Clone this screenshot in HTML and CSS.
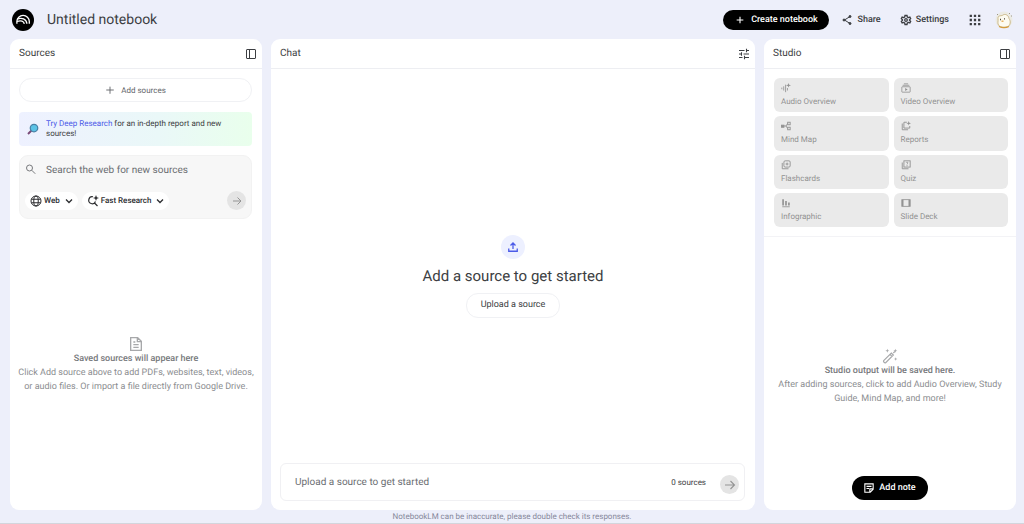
FILE: index.html
```html
<!DOCTYPE html>
<html lang="en">
<head>
  <meta charset="UTF-8">
  <meta name="viewport" content="width=device-width, initial-scale=1.0">
  <title>Untitled notebook</title>
  <link rel="stylesheet" href="styles.css">
</head>
<body>
<header class="topbar">
  <a class="logo" href="#" aria-label="Home">
    <svg viewBox="0 0 22 22" fill="none" stroke="#fff" stroke-width="1.3">
      <circle cx="11" cy="11" r="11" fill="#000" stroke="none"/>
      <path d="M4.900 14.800v-2.200a6.200 6.200 0 0 1 12.400 0v2.200"/>
      <path d="M5.200 10.300c4.400-2.400 9.400 0 9.700 4.500"/>
      <path d="M5 12.500c3.900-1.300 6.900-.4 7.300 2.300"/>
    </svg>
  </a>
  <h1 class="title">Untitled notebook</h1>
  <nav class="actions">
    <button class="pill-dark create">
      <svg class="icon-10" viewBox="0 0 24 24" fill="none" stroke="currentColor" stroke-width="2.600"><path d="M12 4v16M4 12h16"/></svg>
      Create notebook
    </button>
    <button class="link-btn share">
      <svg class="icon-12" viewBox="0 0 24 24" fill="none" stroke="currentColor" stroke-width="2"><path d="M7 12l11-7M7 12l11 7"/><g fill="currentColor"><circle cx="18" cy="5" r="2"/><circle cx="6" cy="12" r="2"/><circle cx="18" cy="19" r="2"/></g></svg>
      Share
    </button>
    <button class="link-btn settings">
      <svg class="icon-12" viewBox="0 0 24 24" fill="none" stroke="currentColor" stroke-width="2.600"><path d="M10 3h4l.7 3 2 1.200 3-.9 1.600 3-2.300 2.100v1.200l2.300 2.100-1.600 3-3-.9-2 1.200-.7 3h-4l-.7-3-2-1.200-3 .9-1.600-3L5 12.600v-1.200L2.700 9.300l1.600-3 3 .9 2-1.200z"/><circle cx="12" cy="12" r="2.600"/></svg>
      Settings
    </button>
    <button class="icon-btn" aria-label="Apps">
      <svg class="icon-16" viewBox="0 0 24 24" fill="currentColor"><path d="M4 4h3.400v3.400H4zM10.300 4h3.400v3.400h-3.400zM16.600 4H20v3.400h-3.400zM4 10.300h3.400v3.400H4zM10.300 10.300h3.400v3.400h-3.400zM16.600 10.300H20v3.400h-3.400zM4 16.600h3.400V20H4zM10.300 16.600h3.400V20h-3.400zM16.600 16.600H20V20h-3.400z"/></svg>
    </button>
    <button class="icon-btn avatar" aria-label="Account">
      <svg viewBox="0 0 18 18" fill="none">
        <circle cx="9" cy="9" r="8.500" fill="#ecebe4"/>
        <path d="M3 7.500C3 4 5.500 5.200 7.500 4.300 10 2.300 13.500 4 14 7.500c2 2.500 1.600 7-1.500 8.200-3 .9-7 .8-8.600-1C2 12.500 3.500 10 3 7.500z" fill="#fdfbf0" stroke="#c0aa72" stroke-width=".8"/>
        <path d="M4 15.500c3 1.400 7 1.400 10 0" stroke="#d39b3d" stroke-width="1.200"/>
        <path d="M5 8.500h1M9 7.800h1" stroke="#4f493c" stroke-width="1.300"/>
        <path d="M6.500 10.200h2" stroke="#e3a54b" stroke-width="1.300"/>
        <path d="M2 3l1 1M14 2l1 1M16 5h1" stroke="#9b9684"/>
      </svg>
    </button>
  </nav>
</header>

<main class="panels">
  <section class="panel">
    <div class="panel-head">
      <h2>Sources</h2>
      <button class="icon-btn" aria-label="Collapse sources">
        <svg class="icon-12" viewBox="0 0 24 24" fill="none" stroke="currentColor" stroke-width="2"><rect x="3" y="3" width="18" height="18" rx="1"/><path d="M9 3v18"/></svg>
      </button>
    </div>
    <div class="sources-top">
      <button class="outline-btn add-sources">
        <svg class="icon-10" viewBox="0 0 24 24" fill="none" stroke="currentColor" stroke-width="2.200"><path d="M12 4v17M3 12h18"/></svg>
        Add sources
      </button>
      <div class="promo">
        <svg class="icon-12" viewBox="0 0 24 24" fill="none"><path d="M9 15l-7 7" stroke="#7a4b78" stroke-width="4"/><circle cx="14" cy="10" r="7.500" fill="#5cc3e6" stroke="#4a81a5" stroke-width="2.500"/></svg>
        <p><a href="#">Try Deep Research</a> for an in-depth report and new sources!</p>
      </div>
      <form class="search">
        <div class="search-row">
          <svg class="icon-12" viewBox="0 0 24 24" fill="none" stroke="currentColor" stroke-width="2"><circle cx="9" cy="8" r="6"/><path d="M13.500 12.500l7 7"/></svg>
          <input type="text" placeholder="Search the web for new sources" aria-label="Search the web for new sources">
        </div>
        <div class="search-row">
          <button type="button" class="chip">
            <svg class="icon-12" viewBox="0 0 24 24" fill="none" stroke="currentColor" stroke-width="2"><circle cx="12" cy="12" r="10"/><ellipse cx="12" cy="12" rx="4.500" ry="10"/><path d="M3 8.500h18M3 15.500h18"/></svg>
            Web
            <svg class="chevron" viewBox="0 0 8 8" fill="none" stroke="currentColor" stroke-width="1.300"><path d="M1 2.500l3 3 3-3"/></svg>
          </button>
          <button type="button" class="chip">
            <svg class="icon-12" viewBox="0 0 24 24" fill="none" stroke="currentColor" stroke-width="2.400"><path d="M12 3.500a7 7 0 1 0 5 9.500M14.500 15.500L21 22"/><path d="M18 0l1.700 4.300L24 6l-4.300 1.700L18 12l-1.700-4.300L12 6l4.300-1.700z" fill="currentColor" stroke="none"/></svg>
            Fast Research
            <svg class="chevron" viewBox="0 0 8 8" fill="none" stroke="currentColor" stroke-width="1.300"><path d="M1 2.500l3 3 3-3"/></svg>
          </button>
          <button class="round-btn" aria-label="Search">
            <svg class="icon-12" viewBox="0 0 24 24" fill="none" stroke="currentColor" stroke-width="2"><path d="M4 12h16M13 5l7 7-7 7"/></svg>
          </button>
        </div>
      </form>
    </div>
    <div class="empty sources-empty">
      <svg class="icon-16" viewBox="0 0 24 24" fill="none" stroke="currentColor" stroke-width="2"><path d="M4 2.500h10.500L20 8v13.500H4zM14 3v5.500h6M8 13h8M8 17h8M8 9h3"/></svg>
      <strong>Saved sources will appear here</strong>
      <p>Click Add source above to add PDFs, websites, text, videos, or audio files. Or import a file directly from Google Drive.</p>
    </div>
  </section>

  <section class="panel">
    <div class="panel-head">
      <h2>Chat</h2>
      <button class="icon-btn" aria-label="Chat settings">
        <svg class="icon-12" viewBox="0 0 24 24" fill="none" stroke="currentColor" stroke-width="2.200"><path d="M2 5h11M17 5h5M17 1.500v7M2 12h5M11 12h11M7 8.500v7M2 19h7M13 19h9M13 15.500v7"/></svg>
      </button>
    </div>
    <div class="chat-body">
      <span class="upload-badge">
        <svg class="icon-12" viewBox="0 0 24 24" fill="none" stroke="currentColor" stroke-width="2.600"><path d="M12 16V4M7 9l5-5 5 5M3.500 15v5.500h17V15"/></svg>
      </span>
      <h3>Add a source to get started</h3>
      <button class="outline-btn upload">Upload a source</button>
    </div>
    <form class="composer">
      <input type="text" placeholder="Upload a source to get started" aria-label="Message">
      <span class="count">0 sources</span>
      <button class="round-btn send" aria-label="Send">
        <svg class="icon-12" viewBox="0 0 24 24" fill="none" stroke="currentColor" stroke-width="2.200"><path d="M2 12h19M13 4l8 8-8 8"/></svg>
      </button>
    </form>
  </section>

  <section class="panel">
    <div class="panel-head">
      <h2>Studio</h2>
      <button class="icon-btn" aria-label="Collapse studio">
        <svg class="icon-12" viewBox="0 0 24 24" fill="none" stroke="currentColor" stroke-width="2"><rect x="3" y="3" width="18" height="18" rx="1"/><path d="M15 3v18"/></svg>
      </button>
    </div>
    <div class="tools">
      <button class="tool">
        <svg class="icon-10" viewBox="0 0 24 24" fill="none" stroke="currentColor" stroke-width="2"><path d="M2 11v4M6.500 8v10M11 4v18M15.500 12v6"/><path d="M18 0l1.500 4L24 5.500 19.500 7 18 11l-1.500-4L12 5.500 16.500 4z" fill="currentColor" stroke="none"/></svg>
        Audio Overview
      </button>
      <button class="tool">
        <svg class="icon-10" viewBox="0 0 24 24" fill="none" stroke="currentColor" stroke-width="2"><rect x="2" y="9" width="20" height="13" rx="1"/><path d="M4 5.500h16M7 2h10"/><path d="M10 12v7l6-3.500z" fill="currentColor" stroke="none"/></svg>
        Video Overview
      </button>
      <button class="tool">
        <svg class="icon-10" viewBox="0 0 24 24" fill="none" stroke="currentColor" stroke-width="2.200"><rect x="1" y="10" width="6" height="5" fill="currentColor"/><rect x="16" y="3" width="6" height="6"/><rect x="16" y="15" width="6" height="6"/><path d="M7 12h5l4-6M12 12l4 6"/></svg>
        Mind Map
      </button>
      <button class="tool">
        <svg class="icon-10" viewBox="0 0 24 24" fill="none" stroke="currentColor" stroke-width="2.200"><path d="M14 3H7v14h14v-5M3 6v15h14"/><path d="M18.500 0l1.400 4L24 5.500 19.900 7l-1.400 4-1.400-4L13 5.500 17.100 4z" fill="currentColor" stroke="none"/></svg>
        Reports
      </button>
      <button class="tool">
        <svg class="icon-10" viewBox="0 0 24 24" fill="none" stroke="currentColor" stroke-width="2.200"><rect x="7" y="2" width="15" height="15" rx="3"/><path d="M3 7v14h15"/><path d="M14.500 4.500l1.400 3.600 3.600 1.400-3.600 1.400-1.400 3.600-1.400-3.600-3.600-1.400 3.600-1.400z" fill="currentColor" stroke="none"/></svg>
        Flashcards
      </button>
      <button class="tool">
        <svg class="icon-10" viewBox="0 0 24 24" fill="none" stroke="currentColor" stroke-width="2.200"><rect x="7" y="2" width="15" height="15"/><path d="M3 6v15h15M12.500 6.500c0-1.500 4-2 4 .5 0 1.600-2 1.600-2 3.500M14.500 12.500V15"/></svg>
        Quiz
      </button>
      <button class="tool">
        <svg class="icon-10" viewBox="0 0 24 24" fill="none" stroke="currentColor" stroke-width="4"><path d="M5 3v15M12 7v11M19 11v7"/><path d="M3 21h18" stroke-width="2"/></svg>
        Infographic
      </button>
      <button class="tool">
        <svg class="icon-10" viewBox="0 0 24 24" fill="none" stroke="currentColor" stroke-width="2"><rect x="2" y="4" width="20" height="16"/><path d="M4 4v16M20 4v16" stroke-width="4"/></svg>
        Slide Deck
      </button>
    </div>
    <div class="empty studio-empty">
      <svg class="icon-16" viewBox="0 0 24 24" fill="none" stroke="currentColor" stroke-width="1.800"><path d="M2.500 19L14 7.500l3 3L5.500 22c-1.500 1-4-1.500-3-3zM12 9.500l3 3M17 7.500l2.500-2.500"/><path d="M20 1l.8 2.200L23 4l-2.200.8L20 7l-.8-2.200L17 4l2.200-.8zM8 1l.8 2.200L11 4l-2.200.8L8 7l-.8-2.200L5 4l2.200-.8zM20.500 14l.7 1.800 1.800.7-1.800.7-.7 1.800-.7-1.800-1.800-.7 1.800-.7z" fill="currentColor" stroke="none"/></svg>
      <strong>Studio output will be saved here.</strong>
      <p>After adding sources, click to add Audio Overview, Study Guide, Mind Map, and more!</p>
    </div>
    <button class="pill-dark add-note">
      <svg class="icon-10" viewBox="0 0 24 24" fill="none" stroke="currentColor" stroke-width="2.600"><path d="M2 2h20v13l-7 7H2zM22 14h-8v8M6 8h12M6 13h6"/></svg>
      Add note
    </button>
  </section>
</main>
<footer class="disclaimer">NotebookLM can be inaccurate, please double check its responses.</footer>
</body>
</html>
```
FILE: styles.css
```css
* {
  box-sizing: border-box;
}
body {
  display: flex;
  flex-direction: column;
  min-height: 100vh;
  margin: 0;
  background-color: #edeffa;
  border-bottom: 1px solid #d3d5dc;
  color: #3c3e42;
  font-family: Roboto, "Liberation Sans", sans-serif;
  font-size: 9px;
  text-rendering: geometricPrecision;
}
h1, h2, h3, p {
  margin: 0;
  font-weight: 400;
}
button, input {
  margin: 0;
  padding: 0;
  border: none;
  background: none;
  color: inherit;
  font: inherit;
  text-rendering: inherit;
}
input {
  flex: 1;
  min-width: 0;
  outline: none;
}
button {
  display: flex;
  align-items: center;
  cursor: pointer;
}
a {
  color: #4c5be8;
  text-decoration: none;
}
svg {
  display: block;
  flex: none;
}
.icon-10 {
  width: 10px;
  height: 10px;
}
.icon-12 {
  width: 12px;
  height: 12px;
}
.icon-16 {
  width: 16px;
  height: 16px;
}

/* top bar */
.topbar {
  display: flex;
  align-items: center;
  height: 39px;
  padding: 0 11px 0 12px;
}
.logo svg {
  width: 22px;
  height: 22px;
}
.title {
  margin-left: 13px;
  font-size: 14px;
}
.actions {
  display: flex;
  align-items: center;
  margin-left: auto;
  font-weight: 500;
}
.pill-dark {
  justify-content: center;
  background-color: #000;
  border-radius: 12px;
  color: #fff;
  font-weight: 500;
}
.create {
  gap: 6px;
  width: 106px;
  height: 20px;
}
.link-btn {
  gap: 4px;
}
.share {
  margin-left: 12px;
}
.settings {
  margin-left: 19px;
}
.actions .icon-btn {
  margin-left: 18px;
}
.actions .avatar {
  margin-left: 12px;
}
.avatar svg {
  width: 18px;
  height: 18px;
}

/* panels */
.panels {
  display: grid;
  flex: 1;
  grid-template-columns: 252fr 484fr 252fr;
  gap: 9px;
  padding: 0 8px 0 10px;
}
.panel {
  display: flex;
  flex-direction: column;
  min-width: 0;
  background-color: #fff;
  border-radius: 9px;
}
.panel-head {
  display: flex;
  align-items: center;
  justify-content: space-between;
  height: 30px;
  padding: 0 5px 0 9px;
  border-bottom: 1px solid #edeef2;
}
.panel-head h2 {
  font-size: 10px;
  line-height: 14px;
}

/* sources */
.sources-top {
  display: flex;
  flex-direction: column;
  padding: 9px 10px 0 9px;
}
.outline-btn {
  justify-content: center;
  border: 1px solid #f0f1f4;
  border-radius: 12px;
}
.add-sources {
  gap: 6px;
  height: 24px;
  color: #63666a;
  font-size: 8px;
}
.promo {
  display: flex;
  align-items: center;
  gap: 7px;
  height: 34px;
  margin-top: 10px;
  padding: 0 9px 0 8px;
  border-radius: 4px;
  background: linear-gradient(90deg, #eef1ff, #eaf8f8 60%, #e9ffec);
  font-size: 8px;
  line-height: 10px;
}
.search {
  display: flex;
  flex-direction: column;
  justify-content: space-between;
  height: 64px;
  margin-top: 9px;
  padding: 5px 5px 8px;
  background-color: #f7f7f7;
  border: 1px solid #f2f2f2;
  border-radius: 9px;
}
.search-row {
  display: flex;
  align-items: center;
  gap: 4px;
}
.search-row > .icon-12 {
  color: #77797c;
}
.search input {
  height: 18px;
  padding-left: 5px;
  font-size: 10px;
}
input::placeholder {
  color: #6a6d71;
  opacity: 1;
}
.chip {
  gap: 2px;
  height: 18px;
  padding: 0 5px;
  background-color: #fff;
  border-radius: 9px;
  color: #2c2d30;
  font-size: 8px;
  font-weight: 500;
}
.chevron {
  width: 8px;
  height: 8px;
  margin-left: 3px;
}
.round-btn {
  justify-content: center;
  width: 19px;
  height: 19px;
  margin-left: auto;
  background-color: #e4e4e4;
  border-radius: 50%;
  color: #949494;
}

/* empty states */
.empty {
  display: flex;
  flex-direction: column;
  align-items: center;
  color: #8c8e91;
  line-height: 14px;
  text-align: center;
}
.empty strong {
  color: #77797c;
  font-weight: 500;
}
.empty .icon-16 {
  color: #a7a8aa;
}
.sources-empty {
  margin: auto 0;
  padding: 0 4px;
}
.studio-empty {
  margin: auto 0;
  padding: 40px 12px 0;
}

/* chat */
.chat-body {
  display: flex;
  flex: 1;
  flex-direction: column;
  align-items: center;
  justify-content: center;
  padding-top: 20px;
}
.upload-badge {
  display: flex;
  align-items: center;
  justify-content: center;
  width: 24px;
  height: 24px;
  background-color: #edf0ff;
  border-radius: 50%;
  color: #4c5be8;
}
.chat-body h3 {
  margin: 7px 0;
  font-size: 15px;
  line-height: 20px;
}
.upload {
  height: 25px;
  padding: 0 14px;
}
.composer {
  display: flex;
  align-items: center;
  height: 38px;
  margin: 0 10px 9px 9px;
  padding: 0 5px 0 14px;
  border: 1px solid #f0f0f3;
  border-radius: 6px;
}
.composer input {
  height: 18px;
  font-size: 10px;
}
.count {
  font-size: 8px;
}
.send {
  margin: 5px 0 0 14px;
}

/* studio */
.tools {
  display: grid;
  grid-template-columns: 1fr 1fr;
  grid-auto-rows: 1fr;
  gap: 4px 5px;
  height: 168px;
  padding: 9px 8px 9px 10px;
  border-bottom: 1px solid #f3f3f6;
}
.tool {
  flex-direction: column;
  align-items: flex-start;
  gap: 4px;
  padding: 5px 7px;
  background-color: #eaeaea;
  border-radius: 6px;
  color: #929292;
  font-size: 8px;
  line-height: 10px;
}
.add-note {
  align-self: center;
  gap: 5px;
  width: 76px;
  height: 24px;
  margin-bottom: 10px;
}

.disclaimer {
  height: 13px;
  color: #86889a;
  font-size: 8px;
  line-height: 13px;
  text-align: center;
}
```
